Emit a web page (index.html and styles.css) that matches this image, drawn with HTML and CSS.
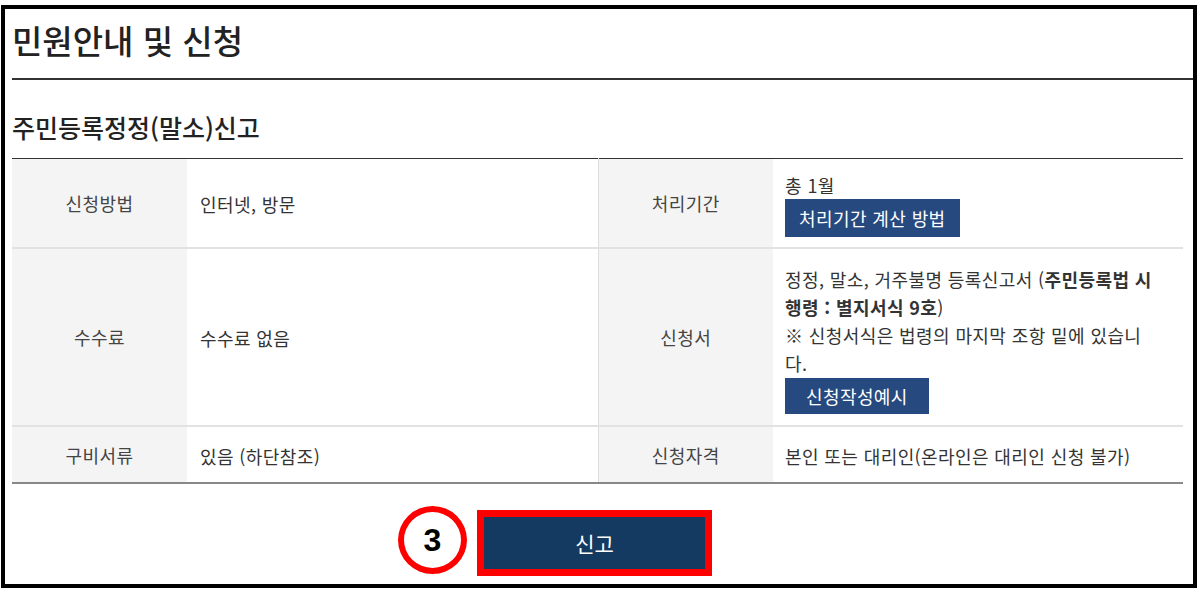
FILE: index.html
```html
<!DOCTYPE html>
<html lang="ko">
<head>
  <meta charset="UTF-8" />
  <meta name="viewport" content="width=device-width, initial-scale=1.0"/>
  <title>민원안내 및 신청</title>
  <link rel="stylesheet" href="styles.css">
</head>
<body>

  <div class="frame">
    <!-- 페이지 제목 -->
    <h1 class="page-title">민원안내 및 신청</h1>

    <!-- 민원 이름 -->
    <h2 class="civil-title">주민등록정정(말소)신고</h2>

    <!-- 안내 표 -->
    <table class="info-table">
      <colgroup>
        <col class="col-th">
        <col class="col-td">
        <col class="col-th">
        <col>
      </colgroup>
      <tr class="row-a">
        <th>신청방법</th>
        <td class="split">인터넷, 방문</td>
        <th>처리기간</th>
        <td>
          <div class="line">총 1월</div>
          <button class="info-btn">처리기간 계산 방법</button>
        </td>
      </tr>
      <tr class="row-b">
        <th>수수료</th>
        <td class="split">수수료 없음</td>
        <th>신청서</th>
        <td class="form-cell">
          <div class="line">정정, 말소, 거주불명 등록신고서 (<b>주민등록법 시</b><b>행령 : 별지서식 9호</b>)</div>
          <div class="line">※ 신청서식은 법령의 마지막 조항 밑에 있습니다.</div>
          <button class="info-btn small">신청작성예시</button>
        </td>
      </tr>
      <tr class="row-c">
        <th>구비서류</th>
        <td class="split">있음 (하단참조)</td>
        <th>신청자격</th>
        <td>본인 또는 대리인(온라인은 대리인 신청 불가)</td>
      </tr>
    </table>

    <!-- 신고 버튼 -->
    <div class="submit-area">
      <div class="submit-mark">
        <span class="step-no">3</span>
        <button class="submit-btn">신고</button>
      </div>
    </div>
  </div>

</body>
</html>
```

FILE: styles.css
```css
* { margin: 0; padding: 0; box-sizing: border-box; }

body {
  font-family: "Noto Sans CJK KR", "Noto Sans", sans-serif;
  color: #333;
  background: #fff;
}

.frame {
  margin: 5px 0 0 1px;
  width: 1196px;
  height: 583px;
  border: 4px solid #000;
  overflow: hidden;
}

.page-title {
  margin-left: 7px;
  padding: 8px 0 15px;
  font-size: 33px;
  line-height: 46px;
  font-weight: 500;
  color: #222;
  border-bottom: 2px solid #333;
}

.civil-title {
  margin: 29px 0 0 7px;
  padding-bottom: 13px;
  font-size: 25px;
  line-height: 36px;
  font-weight: 500;
  color: #222;
}

.info-table {
  margin-left: 7px;
  width: 1171px;
  table-layout: fixed;
  border-collapse: collapse;
  border-top: 1px solid #333;
  border-bottom: 2px solid #888;
  font-size: 18px;
  letter-spacing: 0.4px;
  line-height: 28px;
}

.col-th { width: 175px; }
.col-td { width: 411px; }

.info-table tr { border-bottom: 2px solid #e2e2e2; }
.info-table tr:last-child { border-bottom: none; }

.info-table th {
  background: #f4f4f4;
  font-weight: 400;
  color: #444;
  text-align: center;
  vertical-align: middle;
}

.info-table td {
  padding: 12px 24px 10px 12px;
  vertical-align: middle;
  color: #333;
  word-break: break-all;
}

.info-table td.split { padding-left: 13px; border-right: 1px solid #ddd; }
.info-table td.form-cell { padding-top: 16px; padding-bottom: 11px; }

.row-a { height: 88px; }
.row-b { height: 177px; }
.row-c { height: 57px; }

.info-table b { font-weight: 700; }

.info-btn {
  display: inline-block;
  height: 38px;
  padding: 0 14px;
  background: #264a7f;
  color: #fff;
  border: none;
  font-family: inherit;
  font-size: 18px;
  letter-spacing: 0.4px;
  line-height: 38px;
  vertical-align: top;
}
.info-btn.small { height: 36px; line-height: 36px; margin-top: 1px; padding: 0 21px; }

.submit-area {
  width: 1185px;
  display: flex;
  justify-content: center;
  padding-top: 26px;
}

.submit-mark {
  position: relative;
  border: 7px solid #ff0000;
  margin-right: 6px;
}

.submit-btn {
  display: block;
  width: 221px;
  height: 52px;
  background: #143a62;
  color: #fff;
  border: none;
  font-family: inherit;
  font-size: 21px;
}

/* 단계 표시 동그라미 */
.step-no {
  position: absolute;
  left: -86px;
  top: -11px;
  width: 69px;
  height: 68px;
  border: 6px solid #ff0000;
  border-radius: 50%;
  background: #fff;
  display: flex;
  align-items: center;
  justify-content: center;
  font-family: "Liberation Sans", Arial, sans-serif;
  font-weight: 700;
  font-size: 32px;
  color: #000;
}
```
